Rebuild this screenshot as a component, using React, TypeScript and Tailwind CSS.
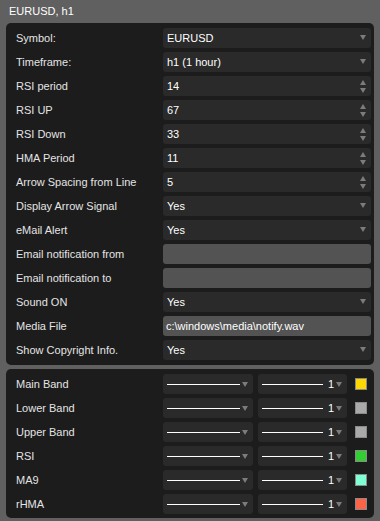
import React from "react";

type Field = {
  label: string;
  kind: "select" | "spin" | "text";
  value?: string;
};

const fields: Field[] = [
  { label: "Symbol:", kind: "select", value: "EURUSD" },
  { label: "Timeframe:", kind: "select", value: "h1 (1 hour)" },
  { label: "RSI period", kind: "spin", value: "14" },
  { label: "RSI UP", kind: "spin", value: "67" },
  { label: "RSI Down", kind: "spin", value: "33" },
  { label: "HMA Period", kind: "spin", value: "11" },
  { label: "Arrow Spacing from Line", kind: "spin", value: "5" },
  { label: "Display Arrow Signal", kind: "select", value: "Yes" },
  { label: "eMail Alert", kind: "select", value: "Yes" },
  { label: "Email notification from", kind: "text", value: "" },
  { label: "Email notification to", kind: "text", value: "" },
  { label: "Sound ON", kind: "select", value: "Yes" },
  { label: "Media File", kind: "text", value: "c:\\windows\\media\\notify.wav" },
  { label: "Show Copyright Info.", kind: "select", value: "Yes" },
];

const plots = [
  { label: "Main Band", color: "bg-[#ffd700]" },
  { label: "Lower Band", color: "bg-[#a9a9a9]" },
  { label: "Upper Band", color: "bg-[#a9a9a9]" },
  { label: "RSI", color: "bg-[#32cd32]" },
  { label: "MA9", color: "bg-[#7fffd4]" },
  { label: "rHMA", color: "bg-[#ff6347]" },
];

const Down = () => (
  <svg width="6" height="5" viewBox="0 0 6 5" className="shrink-0">
    <polygon points="0,0 6,0 3,5" fill="#7c7c7c" />
  </svg>
);

const Up = () => (
  <svg width="6" height="5" viewBox="0 0 6 5" className="shrink-0">
    <polygon points="0,5 6,5 3,0" fill="#7c7c7c" />
  </svg>
);

const Control = ({ field }: { field: Field }) => {
  if (field.kind === "text") {
    return (
      <div className="flex-1 h-[20px] rounded-[3px] bg-[#535353] flex items-center pl-[3px] text-white">
        {field.value}
      </div>
    );
  }
  return (
    <div className="flex-1 h-[20px] rounded-[3px] bg-[#2a2a2a] flex items-center pl-[4px] pr-[5px] text-white">
      <span className="flex-1">{field.value}</span>
      {field.kind === "select" ? (
        <div className="-mt-[2px]">
          <Down />
        </div>
      ) : (
        <div className="flex flex-col gap-[3px]">
          <Up />
          <Down />
        </div>
      )}
    </div>
  );
};

export default function App() {
  return (
    <div
      className="w-[380px] h-[521px] bg-[#606060] text-[11px] leading-none text-[#e4e4e4] overflow-hidden"
      style={{ fontFamily: '"Liberation Sans", Arial, sans-serif' }}
    >
      {/* Title */}
      <div className="h-[23px] pl-[9px] flex items-center text-white">EURUSD, h1</div>

      {/* Inputs */}
      <div className="mx-[6px] rounded-[5px] bg-[#1c1c1c] pt-[5px] pb-[5px] pl-[10px] pr-[3px] flex flex-col gap-[4px]">
        {fields.map((f) => (
          <div key={f.label} className="h-[20px] flex items-center">
            <div className="w-[147px] shrink-0">{f.label}</div>
            <Control field={f} />
          </div>
        ))}
      </div>

      {/* Plot styles */}
      <div className="mx-[6px] mt-[4px] rounded-[5px] bg-[#1c1c1c] pt-[5px] pb-[4px] pl-[10px] pr-[7px] flex flex-col gap-[4px]">
        {plots.map((p) => (
          <div key={p.label} className="h-[20px] flex items-center">
            <div className="w-[147px] shrink-0">{p.label}</div>
            <div className="w-[90px] h-[20px] rounded-[3px] bg-[#2a2a2a] flex items-center pl-[4px] pr-[5px]">
              <div className="w-[73px] h-px bg-white" />
              <div className="flex-1" />
              <Down />
            </div>
            <div className="ml-[5px] w-[89px] h-[20px] rounded-[3px] bg-[#2a2a2a] flex items-center pl-[4px] pr-[5px] text-white">
              <div className="w-[61px] h-px bg-white" />
              <span className="ml-[5px] flex-1">1</span>
              <Down />
            </div>
            <div className={`ml-[8px] w-[12px] h-[12px] border border-[#8a8a8a] ${p.color}`} />
          </div>
        ))}
      </div>
    </div>
  );
}
